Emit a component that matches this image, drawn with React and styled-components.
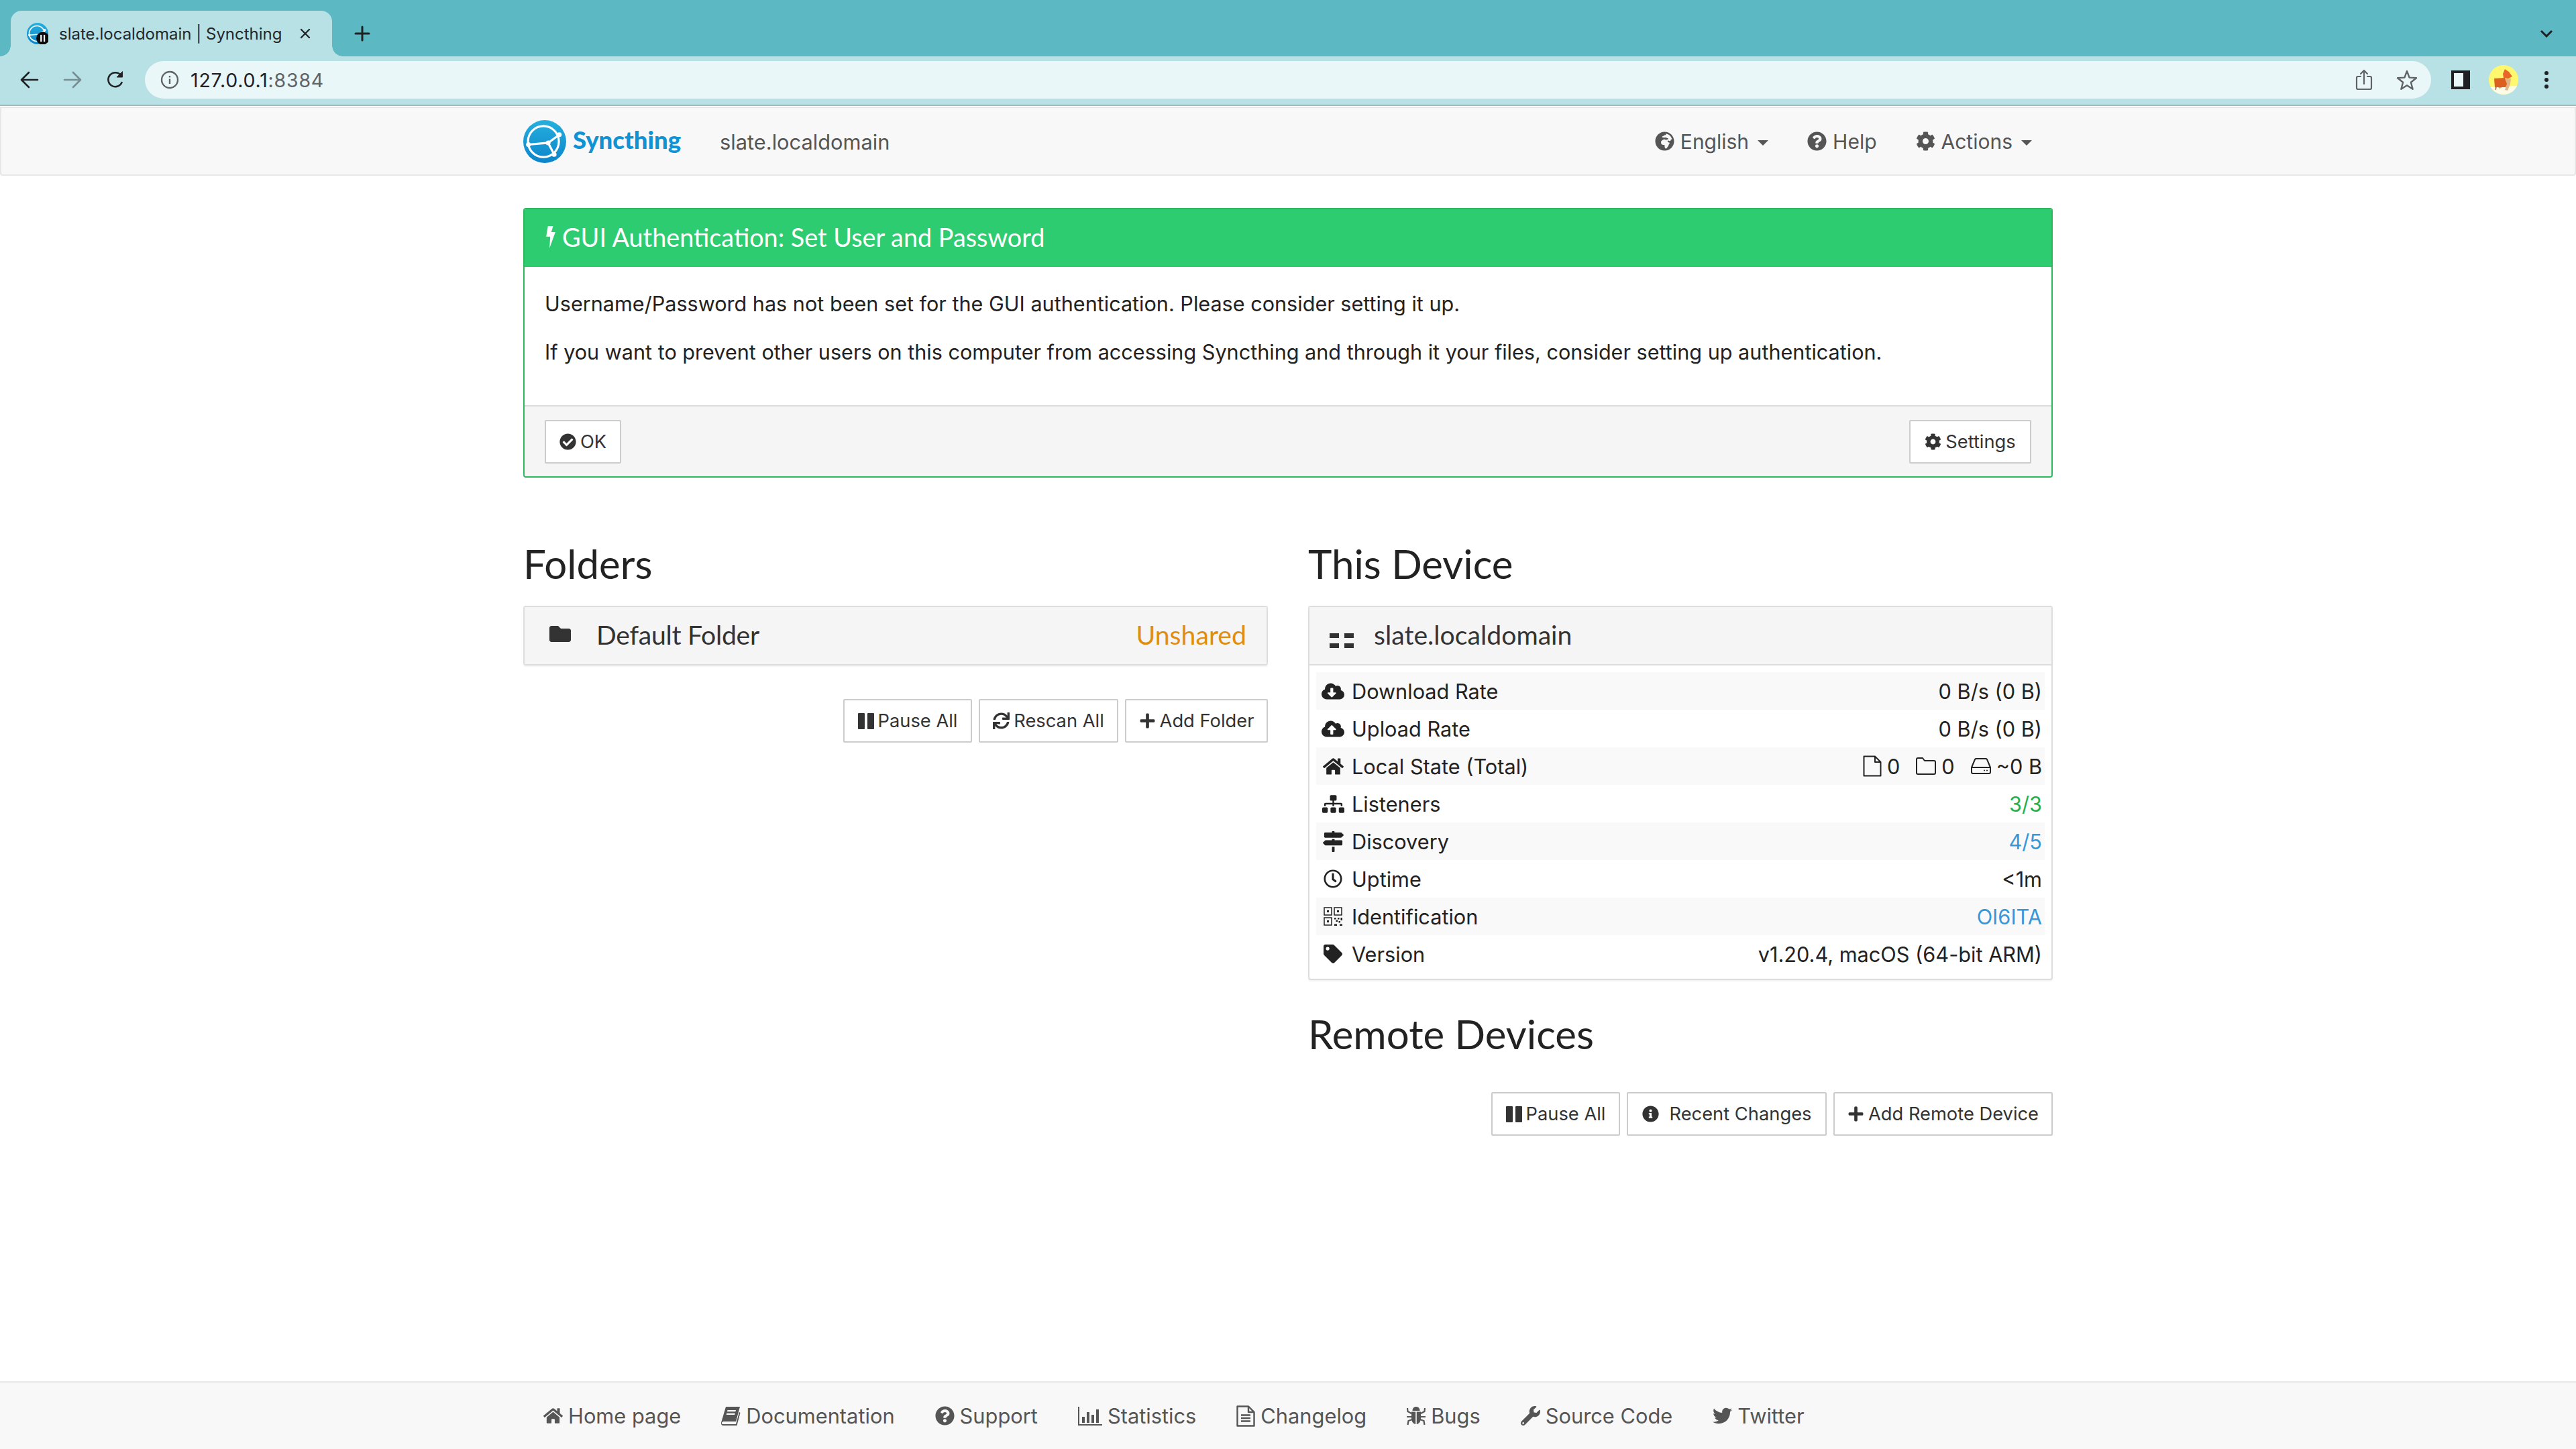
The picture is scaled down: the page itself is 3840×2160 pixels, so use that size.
import React from 'react'
import styled, { createGlobalStyle } from 'styled-components'
import {
    FaGlobeAfrica, FaQuestionCircle, FaCog, FaCheckCircle, FaFolder, FaSync, FaPlus,
    FaCloudDownloadAlt, FaCloudUploadAlt, FaHome, FaSitemap, FaMapSigns, FaRegClock,
    FaTag, FaInfoCircle, FaWrench, FaTwitter,
} from 'react-icons/fa'

const Global = createGlobalStyle`
    html, body { margin: 0; padding: 0; background: #fff; }
    body { font-family: Inter, "Liberation Sans", sans-serif; color: #333; }
    #root { width: 3840px; height: 2160px; overflow: hidden; }
    * { box-sizing: border-box; }
`

const Page = styled.div`
    width: 3840px;
    height: 2160px;
    display: flex;
    flex-direction: column;
`

/* browser chrome */
const TabStrip = styled.div`
    height: 84px;
    background: #5cb8c2;
    display: flex;
    align-items: flex-end;
    padding-left: 16px;
    position: relative;
`
const Tab = styled.div`
    width: 479px;
    height: 68px;
    background: #b8e1e5;
    border-radius: 16px 16px 0 0;
    display: flex;
    align-items: center;
    padding: 0 24px;
    position: relative;
    font-size: 24px;
    color: #23282c;
    &::before, &::after {
        content: '';
        position: absolute;
        bottom: 0;
        width: 16px;
        height: 16px;
    }
    &::before { left: -16px; background: radial-gradient(circle at 0 0, transparent 15.5px, #b8e1e5 16px); }
    &::after { right: -16px; background: radial-gradient(circle at 100% 0, transparent 15.5px, #b8e1e5 16px); }
`
const TabTitle = styled.span`
    margin-left: 16px;
    flex: 1;
    white-space: nowrap;
`
const NewTab = styled.div`
    margin-left: 33px;
    height: 68px;
    display: flex;
    align-items: center;
    color: #202124;
`
const StripChevron = styled.div`
    margin-left: auto;
    margin-right: 34px;
    height: 68px;
    display: flex;
    align-items: center;
`
const Toolbar = styled.div`
    height: 74px;
    background: #b8e1e5;
    border-bottom: 2px solid #9abcbf;
    display: flex;
    align-items: center;
    padding-bottom: 2px;
`
const ToolButton = styled.div`
    width: 64px;
    height: 64px;
    display: flex;
    align-items: center;
    justify-content: center;
    flex: none;
    color: ${p => p.$muted ? '#768e91' : '#202124'};
`
const BackGroup = styled.div`
    display: flex;
    padding-left: 12px;
    margin-right: 12px;
`
const Omnibox = styled.div`
    flex: none;
    width: 3408px;
    height: 56px;
    border-radius: 28px;
    background: #eaf7f8;
    display: flex;
    align-items: center;
    padding-left: 23px;
    font-size: 28.5px;
    letter-spacing: .8px;
    color: #202124;
`
const Origin = styled.span`
    margin-left: 17px;
    & > span { color: #5f6368; }
`
const OmniIcons = styled.div`
    margin-left: auto;
    display: flex;
    margin-right: 4px;
    color: #5f6368;
`
const RightTools = styled.div`
    display: flex;
    align-items: center;
    margin-left: 12px;
`

/* syncthing navbar */
const Navbar = styled.nav`
    height: 103px;
    background: #f8f8f8;
    border: 2px solid #e7e7e7;
    border-radius: 0 0 4px 4px;
    flex: none;
    margin-top: 1px;
`
const Container = styled.div`
    width: 2280px;
    margin: 0 auto;
`
const NavInner = styled(Container)`
    height: 100%;
    display: flex;
    align-items: center;
    color: #555;
    font-size: 30.8px;
`
const Brand = styled.div`
    display: flex;
    align-items: center;
    gap: 10px;
    font-family: Lato, sans-serif;
    font-weight: 900;
    font-size: 36.5px;
    color: #0e93d4;
    margin-top: -5px;
`
const BrandMark = styled.span`
    display: flex;
    margin-top: 5px;
`
const DeviceName = styled.span`
    margin-left: 58px;
    position: relative;
    top: 1px;
`
const NavLinks = styled.div`
    margin-left: auto;
    display: flex;
    align-items: center;
    margin-right: 31px;
    gap: 58px;
    font-size: 30px;
`
const NavLink = styled.div`
    display: flex;
    align-items: center;
    gap: 9px;
    svg { font-size: 29px; }
`
const Caret = styled.span`
    margin-left: 4px;
    margin-top: 4px;
    border-top: 8px solid #555;
    border-left: 8px solid transparent;
    border-right: 8px solid transparent;
`

/* alert */
const Alert = styled.section`
    margin-top: 48px;
    border: 2px solid #2db85c;
    border-radius: 4px;
    overflow: hidden;
`
const AlertHead = styled.div`
    height: 86px;
    background: #2ecc71;
    color: #fff;
    display: flex;
    align-items: center;
    gap: 8px;
    padding: 0 0 3px 30px;
    font-family: Lato, sans-serif;
    font-size: 37.8px;
`
const AlertBody = styled.div`
    height: 206px;
    padding: 29px 30px 0;
    font-size: 30.6px;
    color: #222;
`
const AlertText = styled.p`
    margin: 0 0 20px;
    line-height: 52px;
`
const AlertFoot = styled.div`
    height: 106px;
    background: #f5f5f5;
    border-top: 2px solid #ddd;
    display: flex;
    justify-content: space-between;
    align-items: center;
    padding: 0 30px;
`
const Button = styled.div`
    height: 65px;
    background: #fff;
    border: 2px solid #ccc;
    border-radius: 2px;
    color: #333;
    font-size: 27.3px;
    display: flex;
    align-items: center;
    justify-content: center;
    gap: ${p => p.$gap || 6}px;
    width: ${p => p.$w}px;
    flex: none;
    white-space: nowrap;
    svg { font-size: 25px; }
`

/* columns */
const Columns = styled.div`
    display: grid;
    grid-template-columns: 1110px 1110px;
    column-gap: 60px;
    margin-top: 90px;
`
const Heading = styled.h3`
    margin: ${p => p.$top || 0}px 0 0;
    height: 101px;
    line-height: 76px;
    font-family: Lato, sans-serif;
    font-weight: 400;
    font-size: 60px;
    color: #222;
`
const Panel = styled.div`
    border: 2px solid #ddd;
    border-radius: 4px;
    box-shadow: 0 2px 2px rgba(0, 0, 0, .05);
    background: #fff;
`
const PanelHead = styled.div`
    height: ${p => p.$rule ? 87 : 85}px;
    background: #f5f5f5;
    display: flex;
    align-items: center;
    padding: 0 30px 5px ${p => p.$rule ? 30 : 37}px;
    font-family: Lato, sans-serif;
    font-size: 39.2px;
    color: #333;
    border-bottom: ${p => p.$rule ? '2px solid #ddd' : 'none'};
`
const HeadIcon = styled.span`
    display: flex;
    width: 70px;
    flex: none;
    font-size: 32px;
`
const IdenticonSlot = styled.span`
    display: flex;
    width: 66px;
    flex: none;
    margin-top: 20px;
`
const FolderName = styled.span`
    letter-spacing: -.3px;
`
const Unshared = styled.span`
    margin-left: auto;
    color: #e08e0b;
`
const Buttons = styled.div`
    display: flex;
    justify-content: flex-end;
    gap: 10px;
    margin-top: ${p => p.$top}px;
`
const Stats = styled.div`
    padding: 10px 10px 9px;
`
const Row = styled.div`
    height: 56px;
    display: flex;
    align-items: center;
    padding: 0 4px 0 8px;
    font-size: 30.7px;
    color: #222;
    &:nth-child(odd) { background: #f9f9f9; }
`
const RowIcon = styled.span`
    width: 34px;
    display: flex;
    justify-content: center;
    margin-right: 11px;
    font-size: ${p => p.$size || 28}px;
    height: 34px;
    align-items: center;
`
const Value = styled.span`
    margin-left: auto;
    display: flex;
    align-items: center;
    color: ${p => p.$tone === 'green' ? '#22b14c' : p.$tone === 'blue' ? '#3498db' : '#222'};
`
const Counter = styled.span`
    display: flex;
    align-items: center;
    gap: 8px;
    margin-left: 24px;
`

/* footer */
const Footer = styled.footer`
    margin-top: auto;
    height: 101px;
    background: #f8f8f8;
    border-top: 2px solid #e7e7e7;
`
const FooterLinks = styled(Container)`
    height: 100%;
    display: flex;
    align-items: center;
    gap: 60px;
    padding-left: 30px;
    font-size: 30.8px;
    color: #555;
`
const FooterLink = styled.div`
    display: flex;
    align-items: center;
    gap: 8px;
    white-space: nowrap;
    svg { font-size: 29px; flex: none; }
`

const Logo = ({ size, badge }) => (
    <svg width={size} height={size} viewBox="0 0 100 100" style={{ flex: 'none' }}>
        <defs>
            <linearGradient id={badge ? 'lgb' : 'lg'} x1="0" y1="0" x2="0" y2="1">
                <stop offset="0" stopColor="#26b0de" />
                <stop offset="1" stopColor="#0a84c9" />
            </linearGradient>
        </defs>
        <circle cx="50" cy="50" r="50" fill={`url(#${badge ? 'lgb' : 'lg'})`} />
        <g fill="none" stroke="#fff" strokeWidth="5">
            <circle cx="47" cy="50" r="36" />
            <path d="M12 57 L58 53 L84 34 M58 53 L72 80" />
        </g>
        <g fill="#fff">
            <circle cx="12" cy="57" r="5.5" />
            <circle cx="58" cy="53" r="5.5" />
            <circle cx="84" cy="34" r="5.5" />
            <circle cx="72" cy="80" r="5.5" />
        </g>
        {badge && (
            <g>
                <circle cx="74" cy="72" r="30" fill="#0b0b0b" />
                <rect x="63" y="56" width="7" height="32" fill="#fff" />
                <rect x="78" y="56" width="7" height="32" fill="#fff" />
            </g>
        )}
    </svg>
)

const Corgi = () => (
    <svg width="44" height="44" viewBox="0 0 44 44">
        <defs>
            <clipPath id="av"><circle cx="22" cy="22" r="22" /></clipPath>
        </defs>
        <g clipPath="url(#av)">
            <rect width="44" height="44" fill="#fff86e" />
            <path d="M0 33 L44 31 V44 H0 Z" fill="#fdfbe8" />
            <path d="M8 20 L24 19 L29 27 L25 33 L9 33 Z" fill="#dd5f20" />
            <path d="M21 13 L24 6 L30 10 L35 17 L29 20 L22 19 Z" fill="#e8662a" />
            <path d="M24 20 L33 20 L32 28 L28 38 L24 37 L27 28 Z" fill="#e0b483" />
            <path d="M9 33 L12 33 L11 37 L9 37 Z M14 33 L20 33 L16 35 Z" fill="#c99d6b" />
        </g>
    </svg>
)

const Identicon = () => (
    <svg width="36" height="22" viewBox="0 0 36 22" fill="#333">
        <rect width="14" height="7" />
        <rect x="22" width="14" height="7" />
        <rect y="15" width="14" height="7" />
        <rect x="22" y="15" width="14" height="7" />
    </svg>
)

const Bolt = () => (
    <svg width="18" height="33" viewBox="0 0 41 99" fill="#fff">
        <path d="M8 0H31L23 27H41L15 99L18 47H0Z" />
    </svg>
)

const PauseBars = () => (
    <svg width="24" height="24" viewBox="0 0 24 24" fill="#333">
        <rect width="10" height="24" rx="1" />
        <rect x="14" width="10" height="24" rx="1" />
    </svg>
)

const BarChart = () => (
    <svg width="36" height="28" viewBox="0 0 36 28" fill="#555">
        <path d="M0 0H2V26H36V28H0Z" />
        <rect x="6" y="15" width="4" height="9" />
        <rect x="13" y="8" width="4" height="16" />
        <rect x="20" y="12" width="4" height="12" />
        <rect x="27" y="4" width="4" height="20" />
    </svg>
)

const BookIcon = () => (
    <svg width="29" height="28" viewBox="0 0 29 28" fill="#555">
        <path d="M7 0H28L22 22H3L1 23.5C0.5 25 1.5 26 3 26H22L27 8L28.5 9L23.5 28H3C0.5 28-0.5 25.5 0.2 23Z" />
        <path d="M9.5 5H22L21.4 7.2H8.9ZM8.3 9.8H20.8L20.2 12H7.7Z" fill="#f8f8f8" />
    </svg>
)

const FileLines = () => (
    <svg width="28" height="32" viewBox="0 0 28 32" fill="none" stroke="#555" strokeWidth="2.4" strokeLinejoin="round">
        <path d="M1.5 1.5H18L26.5 10V30.5H1.5Z" />
        <path d="M18 1.5V10H26.5" />
        <path d="M7 14.5H21M7 19H21M7 23.5H21" />
    </svg>
)

const BugIcon = () => (
    <svg width="28" height="29" viewBox="0 0 28 29" fill="#555">
        <path d="M8.5 7C8.5 3 11 1 14 1S19.5 3 19.5 7Z" />
        <path d="M7 8.5H13.2V27C9.5 26.5 7 23 7 18ZM21 8.5H14.8V27C18.5 26.5 21 23 21 18Z" />
        <g fill="none" stroke="#555" strokeWidth="2.2">
            <path d="M1 3L1.5 8L7 11M27 3L26.5 8L21 11M0 16H7M28 16H21M1.5 28L2.5 22L8 20M26.5 28L25.5 22L20 20" />
        </g>
    </svg>
)

const QrOutline = () => (
    <svg width="28" height="28" viewBox="0 0 28 28" fill="none" stroke="#222" strokeWidth="1.5">
        <rect x="1" y="1" width="11" height="11" />
        <rect x="16" y="1" width="11" height="11" />
        <rect x="1" y="16" width="11" height="11" />
        <g fill="#222" stroke="none">
            <rect x="5" y="5" width="3" height="3" />
            <rect x="20" y="5" width="3" height="3" />
            <rect x="5" y="20" width="3" height="3" />
            <path d="M16 16H18.5V18.5H16ZM21 16H23.5V18.5H21ZM25.5 16H28V20H25.5ZM18.5 19.5H21V22H18.5ZM22.5 21H25V23.5H22.5ZM16 25.5H20V28H16ZM24 25.5H28V28H24Z" />
        </g>
    </svg>
)

const FileOutline = () => (
    <svg width="28" height="32" viewBox="0 0 28 32" fill="none" stroke="#222" strokeWidth="2" strokeLinejoin="round">
        <path d="M1.5 1.5H18L26.5 10V30.5H1.5Z" />
        <path d="M18 1.5V10H26.5" />
    </svg>
)

const FolderOutline = () => (
    <svg width="30" height="26" viewBox="0 0 30 26" fill="none" stroke="#222" strokeWidth="2" strokeLinejoin="round">
        <path d="M1 3a2 2 0 0 1 2-2h7l3 4h14a2 2 0 0 1 2 2v16a2 2 0 0 1-2 2H3a2 2 0 0 1-2-2Z" />
    </svg>
)

const DiskOutline = () => (
    <svg width="30" height="24" viewBox="0 0 30 24" fill="none" stroke="#222" strokeWidth="2" strokeLinejoin="round">
        <path d="M1 14L6 2a2 2 0 0 1 2-1h14a2 2 0 0 1 2 1l5 12V21a2 2 0 0 1-2 2H3a2 2 0 0 1-2-2Z" />
        <path d="M1 14H29" />
        <circle cx="20" cy="18.5" r="1" fill="#222" stroke="none" />
        <circle cx="24" cy="18.5" r="1" fill="#222" stroke="none" />
    </svg>
)

const line = { fill: 'none', stroke: 'currentColor', strokeLinecap: 'round', strokeLinejoin: 'round' }

const Back = ({ flip }) => (
    <svg width="28" height="28" viewBox="0 0 28 28" {...line} strokeWidth="2.6" style={{ transform: flip ? 'scaleX(-1)' : 'none' }}>
        <path d="M26 14H3M13 3L2 14L13 25" />
    </svg>
)

const Reload = () => (
    <svg width="28" height="28" viewBox="0 0 28 28" {...line} strokeWidth="2.6">
        <path d="M23.5 18a10.5 10.5 0 1 1-1.5-11" />
        <path d="M24.5 2V10H16.5Z" fill="currentColor" strokeWidth="1" />
    </svg>
)

const InfoRound = () => (
    <svg width="28" height="28" viewBox="0 0 28 28" fill="none" stroke="#5f6368" strokeWidth="2.4">
        <circle cx="14" cy="14" r="12" />
        <path d="M14 12.5V20" />
        <path d="M14 8V10.4" />
    </svg>
)

const Share = () => (
    <svg width="64" height="32" viewBox="0 0 32 32" {...line} strokeWidth="2.2">
        <path d="M11 11H7a2 2 0 0 0-2 2V28a2 2 0 0 0 2 2H25a2 2 0 0 0 2-2V13a2 2 0 0 0-2-2H21" />
        <path d="M16 22V2M11 7L16 2L21 7" />
    </svg>
)

const StarIcon = () => (
    <svg width="64" height="32" viewBox="0 0 32 32" {...line} strokeWidth="2.4" strokeLinecap="butt">
        <path d="M16 3L19.6 12.6L30 13.2L21.9 19.7L24.6 29.8L16 24.2L7.4 29.8L10.1 19.7L2 13.2L12.4 12.6Z" />
    </svg>
)

const SidePanel = () => (
    <svg width="28" height="28" viewBox="0 0 28 28">
        <rect width="28" height="28" fill="#1f2023" />
        <rect x="4" y="4" width="14" height="20" fill="#eaf7f8" />
    </svg>
)

const Dots = () => (
    <svg width="8" height="28" viewBox="0 0 8 28" fill="#202124">
        <circle cx="4" cy="4" r="3" />
        <circle cx="4" cy="14" r="3" />
        <circle cx="4" cy="24" r="3" />
    </svg>
)

const CloseX = () => (
    <svg width="16" height="16" viewBox="0 0 16 16" {...line} strokeWidth="2.4" style={{ marginRight: 8 }}>
        <path d="M2 2L14 14M14 2L2 14" />
    </svg>
)

const PlusThin = () => (
    <svg width="24" height="24" viewBox="0 0 24 24" {...line} strokeWidth="3">
        <path d="M12 2V22M2 12H22" />
    </svg>
)

const Chevron = () => (
    <svg width="20" height="12" viewBox="0 0 20 12" fill="none" stroke="#202124" strokeWidth="3">
        <path d="M2 2L10 10L18 2" />
    </svg>
)

const stats = [
    { icon: <FaCloudDownloadAlt />, size: 35, label: 'Download Rate', value: '0 B/s (0 B)' },
    { icon: <FaCloudUploadAlt />, size: 35, label: 'Upload Rate', value: '0 B/s (0 B)' },
    {
        icon: <FaHome />,
        size: 31,
        label: 'Local State (Total)',
        value: (
            <>
                <Counter><FileOutline />0</Counter>
                <Counter><FolderOutline />0</Counter>
                <Counter><DiskOutline />~0 B</Counter>
            </>
        ),
    },
    { icon: <FaSitemap />, size: 33, label: 'Listeners', value: '3/3', tone: 'green' },
    { icon: <FaMapSigns />, size: 31, label: 'Discovery', value: '4/5', tone: 'blue' },
    { icon: <FaRegClock />, label: 'Uptime', value: '<1m' },
    { icon: <QrOutline />, label: 'Identification', value: 'OI6ITA', tone: 'blue' },
    { icon: <FaTag />, label: 'Version', value: 'v1.20.4, macOS (64-bit ARM)' },
]

const footerLinks = [
    { icon: <FaHome />, label: 'Home page' },
    { icon: <BookIcon />, label: 'Documentation' },
    { icon: <FaQuestionCircle />, label: 'Support' },
    { icon: <BarChart />, label: 'Statistics' },
    { icon: <FileLines />, label: 'Changelog' },
    { icon: <BugIcon />, label: 'Bugs' },
    { icon: <FaWrench />, label: 'Source Code' },
    { icon: <FaTwitter />, label: 'Twitter' },
]

const App = () => (
    <Page>
        <Global />
        <TabStrip>
            <Tab>
                <Logo size={32} badge />
                <TabTitle>slate.localdomain | Syncthing</TabTitle>
                <CloseX />
            </Tab>
            <NewTab><PlusThin /></NewTab>
            <StripChevron><Chevron /></StripChevron>
        </TabStrip>
        <Toolbar>
            <BackGroup>
                <ToolButton><Back /></ToolButton>
                <ToolButton $muted><Back flip /></ToolButton>
                <ToolButton><Reload /></ToolButton>
            </BackGroup>
            <Omnibox>
                <InfoRound />
                <Origin>127.0.0.1<span>:8384</span></Origin>
                <OmniIcons>
                    <Share />
                    <StarIcon />
                </OmniIcons>
            </Omnibox>
            <RightTools>
                <ToolButton><SidePanel /></ToolButton>
                <ToolButton><Corgi /></ToolButton>
                <ToolButton><Dots /></ToolButton>
            </RightTools>
        </Toolbar>
        <Navbar>
            <NavInner>
                <Brand>
                    <BrandMark><Logo size={64} /></BrandMark>
                    Syncthing
                </Brand>
                <DeviceName>slate.localdomain</DeviceName>
                <NavLinks>
                    <NavLink><FaGlobeAfrica />English<Caret /></NavLink>
                    <NavLink><FaQuestionCircle />Help</NavLink>
                    <NavLink><FaCog />Actions<Caret /></NavLink>
                </NavLinks>
            </NavInner>
        </Navbar>
        <Container>
            <Alert>
                <AlertHead><Bolt />GUI Authentication: Set User and Password</AlertHead>
                <AlertBody>
                    <AlertText>Username/Password has not been set for the GUI authentication. Please consider setting it up.</AlertText>
                    <AlertText>If you want to prevent other users on this computer from accessing Syncthing and through it your files, consider setting up authentication.</AlertText>
                </AlertBody>
                <AlertFoot>
                    <Button $w={114}><FaCheckCircle />OK</Button>
                    <Button $w={182}><FaCog />Settings</Button>
                </AlertFoot>
            </Alert>
            <Columns>
                <div>
                    <Heading>Folders</Heading>
                    <Panel>
                        <PanelHead>
                            <HeadIcon><FaFolder /></HeadIcon>
                            <FolderName>Default Folder</FolderName>
                            <Unshared>Unshared</Unshared>
                        </PanelHead>
                    </Panel>
                    <Buttons $top={50}>
                        <Button $w={192}><PauseBars />Pause All</Button>
                        <Button $w={208}><FaSync />Rescan All</Button>
                        <Button $w={213}><FaPlus />Add Folder</Button>
                    </Buttons>
                </div>
                <div>
                    <Heading>This Device</Heading>
                    <Panel>
                        <PanelHead $rule>
                            <IdenticonSlot><Identicon /></IdenticonSlot>
                            slate.localdomain
                        </PanelHead>
                        <Stats>
                            {stats.map(s => (
                                <Row key={s.label}>
                                    <RowIcon $size={s.size}>{s.icon}</RowIcon>
                                    {s.label}
                                    <Value $tone={s.tone}>{s.value}</Value>
                                </Row>
                            ))}
                        </Stats>
                    </Panel>
                    <Heading $top={42}>Remote Devices</Heading>
                    <Buttons $top={24}>
                        <Button $w={192}><PauseBars />Pause All</Button>
                        <Button $w={298} $gap={16}><FaInfoCircle />Recent Changes</Button>
                        <Button $w={327}><FaPlus />Add Remote Device</Button>
                    </Buttons>
                </div>
            </Columns>
        </Container>
        <Footer>
            <FooterLinks>
                {footerLinks.map(l => (
                    <FooterLink key={l.label}>{l.icon}{l.label}</FooterLink>
                ))}
            </FooterLinks>
        </Footer>
    </Page>
)

export default App
